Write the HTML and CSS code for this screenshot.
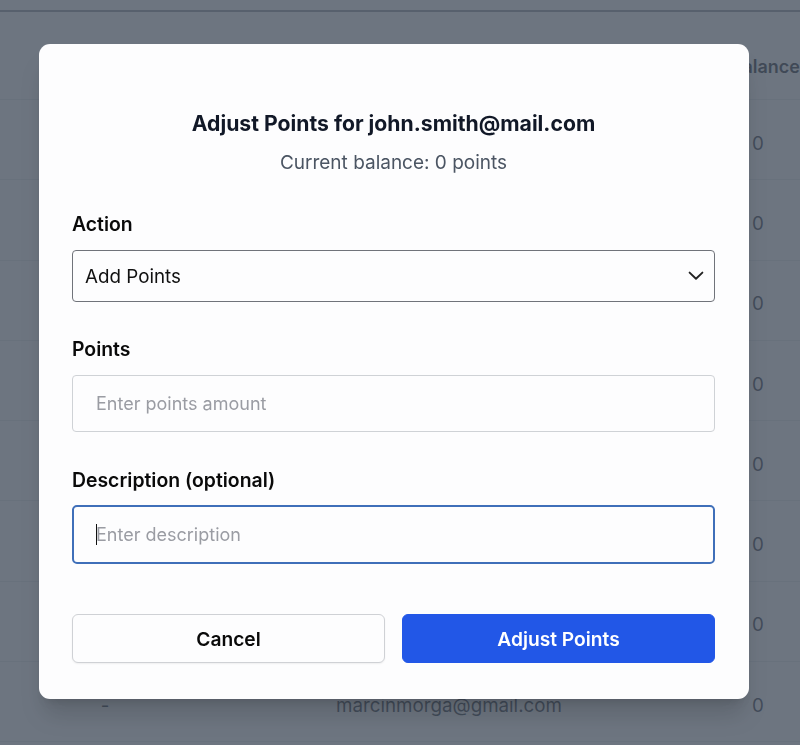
FILE: index.html
```html
<!DOCTYPE html>
<html lang="en">
<head>
<meta charset="utf-8">
<title>Adjust Points</title>
<link rel="stylesheet" href="styles.css">
</head>
<body>
<div class="page">
  <div class="table">
    <div class="row head">
      <span class="c1">Name</span><span class="c2">Email</span><span class="c3">Balance</span>
    </div>
    <div class="row"><span class="c1">-</span><span class="c2">user1@mail.com</span><span class="c3">0</span></div>
    <div class="row"><span class="c1">-</span><span class="c2">user2@mail.com</span><span class="c3">0</span></div>
    <div class="row"><span class="c1">-</span><span class="c2">user3@mail.com</span><span class="c3">0</span></div>
    <div class="row"><span class="c1">-</span><span class="c2">user4@mail.com</span><span class="c3">0</span></div>
    <div class="row"><span class="c1">-</span><span class="c2">user5@mail.com</span><span class="c3">0</span></div>
    <div class="row"><span class="c1">-</span><span class="c2">user6@mail.com</span><span class="c3">0</span></div>
    <div class="row"><span class="c1">-</span><span class="c2">user7@mail.com</span><span class="c3">0</span></div>
    <div class="row"><span class="c1">-</span><span class="c2">marcinmorga@gmail.com</span><span class="c3">0</span></div>
  </div>
</div>
<div class="overlay"></div>
<div class="modal">
  <h2 class="title">Adjust Points for john.smith@mail.com</h2>
  <p class="subtitle">Current balance: 0 points</p>
  <div class="field">
    <label class="label">Action</label>
    <div class="select">
      <span>Add Points</span>
      <svg class="chev" width="16" height="16" viewBox="0 0 16 16"><path d="M1.6 4.6 L8 10.8 L14.4 4.6" fill="none" stroke="#222" stroke-width="1.9" stroke-linecap="round" stroke-linejoin="round"/></svg>
    </div>
  </div>
  <div class="field">
    <label class="label">Points</label>
    <div class="input"><span class="ph">Enter points amount</span></div>
  </div>
  <div class="field field-wide">
    <label class="label">Description (optional)</label>
    <div class="input focus"><span class="caret"></span><span class="ph">Enter description</span></div>
  </div>
  <div class="actions">
    <button class="btn cancel">Cancel</button>
    <button class="btn primary">Adjust Points</button>
  </div>
</div>
</body>
</html>
```
FILE: styles.css
```css
html, body {
  margin: 0;
  padding: 0;
  height: 745px;
  overflow: hidden;
  background: #ffffff;
  font-family: Inter, "Noto Sans", sans-serif;
}
.page {
  padding-top: 10px;
}
.table {
  border-top: 2px solid #8a8f99;
}
.row {
  display: flex;
  align-items: center;
  height: 80.3px;
  box-sizing: border-box;
  padding-top: 7px;
  border-bottom: 1px solid #e5e7eb;
  font-size: 18.75px;
  color: #1f2937;
}
.row.head {
  height: 88px;
  align-items: flex-end;
  padding-top: 0;
  padding-bottom: 20px;
  font-size: 18px;
  line-height: 24px;
  font-weight: 600;
  color: #111827;
}
.c1 { width: 210px; text-align: center; }
.c2 { width: 478px; text-align: center; }
.c3 { padding-left: 64px; }
.row.head .c3 { padding-left: 49px; }

.overlay {
  position: fixed;
  inset: 0;
  background: rgba(75, 85, 99, 0.81);
}
.modal {
  position: fixed;
  left: 39px;
  top: 44px;
  width: 710px;
  box-sizing: border-box;
  padding: 65px 34px 36px 33px;
  background: #fdfdfe;
  border-radius: 11px;
  box-shadow: 0 20px 25px -5px rgba(0,0,0,0.15), 0 8px 10px -6px rgba(0,0,0,0.12);
}
.title {
  margin: 0;
  font-size: 21.2px;
  line-height: 28px;
  font-weight: 700;
  text-align: center;
  color: #111827;
}
.subtitle {
  margin: 12px 0 0;
  font-size: 19px;
  line-height: 28px;
  text-align: center;
  color: #4b5563;
}
.field {
  display: flex;
  flex-direction: column;
  margin-top: 35px;
}
.field-wide {
  margin-top: 36px;
}
.label {
  font-size: 19.4px;
  line-height: 24px;
  font-weight: 600;
  color: #0a0a0a;
  margin-bottom: 14px;
}
.field-wide .label {
  margin-bottom: 13px;
}
.select {
  height: 52px;
  box-sizing: border-box;
  border: 1px solid #70737a;
  border-radius: 4px;
  display: flex;
  align-items: center;
  justify-content: space-between;
  padding: 0 10px 0 12px;
  font-size: 18.8px;
  color: #111;
}
.chev { display: block; }
.input {
  height: 57px;
  box-sizing: border-box;
  border: 1px solid #cfd2d6;
  border-radius: 4px;
  display: flex;
  align-items: center;
  padding: 0 23px;
  font-size: 18px;
}
.input.focus {
  height: 59px;
  border: 2px solid #3f6fb9;
  border-radius: 5px;
  padding: 0 22px;
}
.ph { color: #9a9ca3; }
.caret {
  display: inline-block;
  width: 1px;
  height: 21px;
  background: #111;
  margin-right: -1px;
}
.actions {
  display: flex;
  gap: 17px;
  margin-top: 50px;
}
.btn {
  flex: 1;
  height: 49px;
  border-radius: 6px;
  font-family: inherit;
  font-size: 19.2px;
  font-weight: 600;
  cursor: pointer;
}
.cancel {
  background: #fdfdfe;
  border: 1px solid #cfd1d5;
  color: #0a0a0a;
  box-shadow: 0 1px 2px rgba(0,0,0,0.06);
}
.primary {
  background: #2257e7;
  border: 1px solid #2257e7;
  color: #ffffff;
}
```
